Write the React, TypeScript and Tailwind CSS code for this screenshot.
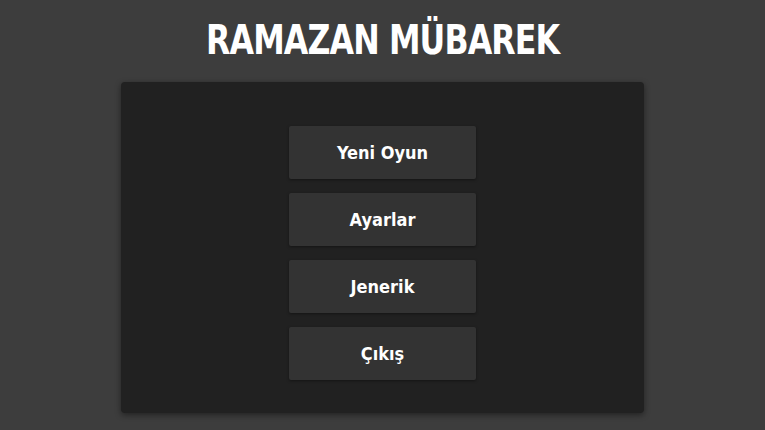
const items = ['Yeni Oyun', 'Ayarlar', 'Jenerik', 'Çıkış'];

export default function App(): JSX.Element {
  return (
    <div className="w-[765px] h-[430px] bg-[#3d3d3d] flex flex-col items-center overflow-hidden" style={{ fontFamily: '"DejaVu Sans Condensed", "DejaVu Sans", sans-serif' }}>
      <h1 className="mt-[14px] h-[52px] flex items-center text-[40px] font-bold text-white tracking-tight leading-none scale-x-[0.88]">
        RAMAZAN MÜBAREK
      </h1>
      <div className="mt-[16px] w-[523px] h-[331px] bg-[#212121] rounded-[4px] shadow-[0_2px_6px_rgba(0,0,0,0.45)] flex flex-col items-center pt-[44px] gap-[14px]">
        {items.map((label) => (
          <button
            key={label}
            className="w-[187px] h-[53px] bg-[#333333] rounded-[2px] text-white text-[18px] font-bold flex items-center justify-center shadow-[0_1px_3px_rgba(0,0,0,0.4)]"
          >
            {label}
          </button>
        ))}
      </div>
    </div>
  );
}
